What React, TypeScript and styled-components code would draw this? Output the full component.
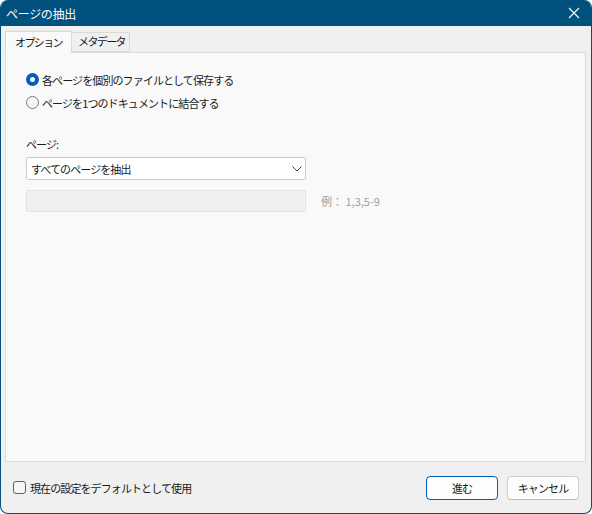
import React from 'react';
import styled, { createGlobalStyle } from 'styled-components';

const GlobalStyle = createGlobalStyle`
  html, body {
    margin: 0;
    padding: 0;
    background: #ffffff;
  }
  body {
    font-family: "Noto Sans CJK JP", "Noto Sans", sans-serif;
    font-size: 11px;
    letter-spacing: -0.9px;
    color: #1a1a1a;
  }
`;

const Window = styled.div`
  box-sizing: border-box;
  width: 592px;
  height: 514px;
  display: flex;
  flex-direction: column;
  background: #f0f0f0;
  border: 1px solid #00517d;
  border-top: none;
  border-radius: 8px;
  overflow: hidden;
`;

const TitleBar = styled.div`
  height: 26px;
  flex: none;
  background: #00517d;
  color: #ffffff;
  display: flex;
  align-items: center;
  justify-content: space-between;
  padding: 0 10px 0 5px;
  font-size: 12px;
  letter-spacing: -0.3px;
`;

const CloseButton = styled.span`
  display: flex;
  align-items: center;
  justify-content: center;
  width: 14px;
  height: 14px;
`;

const Body = styled.div`
  flex: 1;
  display: flex;
  flex-direction: column;
  padding: 5px 5px 0 4px;
`;

const TabStrip = styled.div`
  display: flex;
  align-items: flex-end;
  height: 21px;
  position: relative;
  z-index: 1;
`;

const Tab = styled.div<{ active?: boolean }>`
  box-sizing: border-box;
  height: ${({ active }) => (active ? '22px' : '20px')};
  padding: 0 ${({ active }) => (active ? '9px' : '4px')} 2px
    ${({ active }) => (active ? '9px' : '6px')};
  display: flex;
  align-items: center;
  letter-spacing: -1.6px;
  background: ${({ active }) => (active ? '#f9f9f9' : '#f0f0f0')};
  border: 1px solid #d9d9d9;
  border-bottom: ${({ active }) => (active ? 'none' : '1px solid #d9d9d9')};
  margin-left: ${({ active }) => (active ? '0' : '-1px')};
  margin-bottom: ${({ active }) => (active ? '-1px' : '0')};
  color: #1a1a1a;
`;

const Panel = styled.div`
  box-sizing: border-box;
  height: 410px;
  background: #f9f9f9;
  border: 1px solid #dcdcdc;
  padding: 15px 0 0 20px;
  display: flex;
  flex-direction: column;
`;

const RadioRow = styled.label`
  display: flex;
  align-items: center;
  gap: 3px;
  height: 23px;
`;

const RadioDot = styled.span<{ checked?: boolean }>`
  box-sizing: border-box;
  width: 13px;
  height: 13px;
  border-radius: 50%;
  flex: none;
  background: ${({ checked }) => (checked ? '#ffffff' : '#f6f6f6')};
  border: ${({ checked }) => (checked ? '4px solid #005fb8' : '1px solid #7a7a7a')};
`;

const FieldLabel = styled.div`
  margin-top: 21px;
  height: 18px;
  line-height: 18px;
`;

const Select = styled.div`
  box-sizing: border-box;
  margin-top: 4px;
  width: 280px;
  height: 23px;
  background: #ffffff;
  border: 1px solid #cccccc;
  border-radius: 2px;
  display: flex;
  align-items: center;
  justify-content: space-between;
  padding: 0 3px 0 4px;
`;

const RangeRow = styled.div`
  margin-top: 10px;
  display: flex;
  align-items: center;
  gap: 15px;
`;

const DisabledInput = styled.div`
  box-sizing: border-box;
  width: 280px;
  height: 22px;
  background: #f0f0f0;
  border: 1px solid #e3e3e3;
  border-radius: 2px;
`;

const Hint = styled.span`
  color: #a0a0a0;
  letter-spacing: 0;
`;

const Footer = styled.div`
  flex: 1;
  display: flex;
  align-items: center;
  justify-content: space-between;
  padding: 0 7px 0 8px;
`;

const CheckRow = styled.label`
  display: flex;
  align-items: center;
  gap: 4px;
`;

const CheckBox = styled.span`
  box-sizing: border-box;
  width: 13px;
  height: 13px;
  border: 1px solid #5f5f5f;
  border-radius: 3px;
  background: #f6f6f6;
`;

const Buttons = styled.div`
  display: flex;
  gap: 9px;
`;

const Button = styled.button<{ primary?: boolean }>`
  box-sizing: border-box;
  width: 72px;
  height: 24px;
  font: inherit;
  letter-spacing: inherit;
  color: #1a1a1a;
  background: #fdfdfd;
  border: 1px solid ${({ primary }) => (primary ? '#005fb8' : '#d0d0d0')};
  border-bottom-color: ${({ primary }) => (primary ? '#005fb8' : '#bcbcbc')};
  border-radius: 4px;
  padding: 0;
`;

export default function App() {
  return (
    <>
      <GlobalStyle />
      <Window>
        <TitleBar>
          <span>ページの抽出</span>
          <CloseButton>
            <svg width="12" height="12" viewBox="0 0 12 12">
              <path d="M1 1L11 11M11 1L1 11" stroke="#ffffff" strokeWidth="1.1" />
            </svg>
          </CloseButton>
        </TitleBar>
        <Body>
          <TabStrip>
            <Tab active>オプション</Tab>
            <Tab>メタデータ</Tab>
          </TabStrip>
          <Panel>
            <RadioRow>
              <RadioDot checked />
              各ページを個別のファイルとして保存する
            </RadioRow>
            <RadioRow>
              <RadioDot />
              ページを1つのドキュメントに結合する
            </RadioRow>
            <FieldLabel>ページ:</FieldLabel>
            <Select>
              <span>すべてのページを抽出</span>
              <svg width="10" height="6" viewBox="0 0 10 6">
                <path d="M0.5 0.5L5 5L9.5 0.5" stroke="#444" strokeWidth="1" fill="none" />
              </svg>
            </Select>
            <RangeRow>
              <DisabledInput />
              <Hint>例： 1,3,5-9</Hint>
            </RangeRow>
          </Panel>
          <Footer>
            <CheckRow>
              <CheckBox />
              現在の設定をデフォルトとして使用
            </CheckRow>
            <Buttons>
              <Button primary>進む</Button>
              <Button>キャンセル</Button>
            </Buttons>
          </Footer>
        </Body>
      </Window>
    </>
  );
}
